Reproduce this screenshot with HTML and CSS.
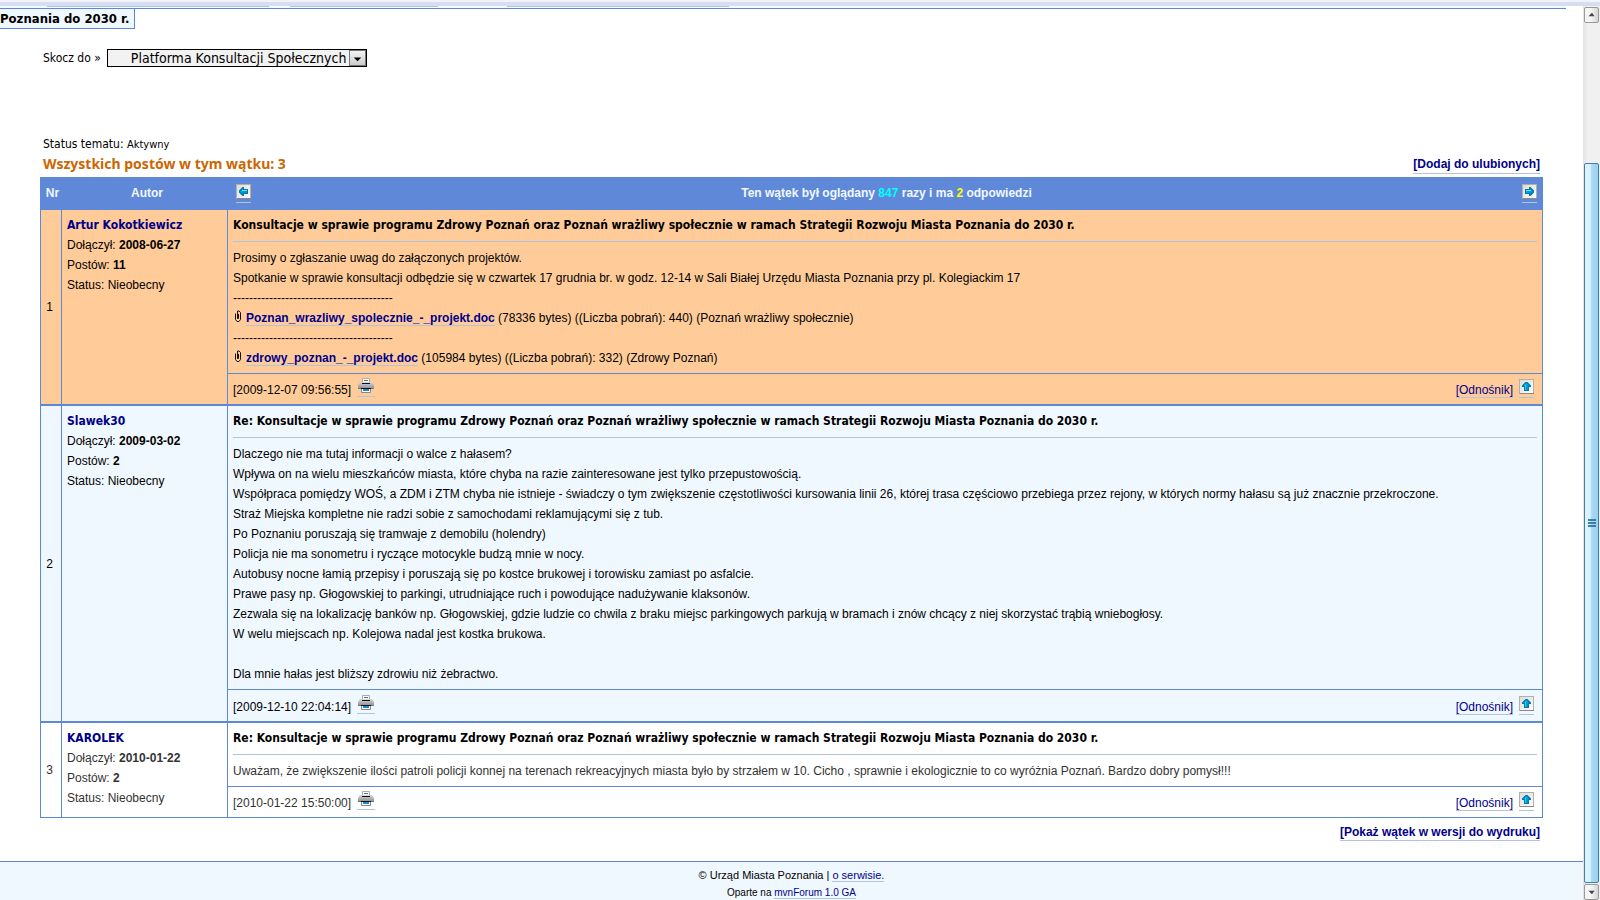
FILE: index.html
```html
<!DOCTYPE html>
<html lang="pl">
<head>
<meta charset="utf-8">
<title>Platforma Konsultacji Społecznych</title>
<link rel="stylesheet" href="styles.css">
</head>
<body>
<svg class="defs" aria-hidden="true">
  <defs>
    <linearGradient id="key" x1="0" y1="0" x2="1" y2="1"><stop offset="0" stop-color="#dcdcd8"/><stop offset="1" stop-color="#fcfcfa"/></linearGradient>
    <linearGradient id="arrow" x1="0" y1="0" x2="1" y2="1"><stop offset="0" stop-color="#00c0ee"/><stop offset="1" stop-color="#0080c4"/></linearGradient>
    <linearGradient id="metal" x1="0" y1="0" x2="0" y2="1"><stop offset="0" stop-color="#d8d8dc"/><stop offset="1" stop-color="#88888e"/></linearGradient>
    <symbol id="frame" viewBox="0 0 15 15">
      <rect width="15" height="15" fill="#b4b0a8"/><rect x="1" y="1" width="13" height="13" fill="url(#key)"/><path d="M1 14.5h14" stroke="#8c8982"/>
    </symbol>
    <symbol id="right" viewBox="0 0 15 15">
      <use href="#frame"/><path d="M3 5h4V3h1.500L12 6.500v2L8.500 12H7v-2H3z" fill="#0078ac"/><path d="M4 6h4V4.500l3 3-3 3V9H4z" fill="url(#arrow)"/><path d="M4 6.500h5" stroke="#6cdcf8"/>
    </symbol>
    <symbol id="left" viewBox="0 0 15 15">
      <use href="#frame"/><path d="M12 5H8V3H6.500L3 6.500v2L6.500 12H8v-2h4z" fill="#0078ac"/><path d="M11 6H7V4.500l-3 3 3 3V9h4z" fill="url(#arrow)"/><path d="M6 6.500h5" stroke="#6cdcf8"/>
    </symbol>
    <symbol id="up" viewBox="0 0 15 15">
      <use href="#frame"/><path d="M5 12V8H3V6.500L6.500 3h2L12 6.500V8h-2v4z" fill="#0078ac"/><path d="M6 11V7H4.500l3-3 3 3H9v4z" fill="url(#arrow)"/><path d="M6.500 5.500V11" stroke="#30c8f0"/>
    </symbol>
    <symbol id="printer" viewBox="0 0 18 16">
      <path d="M5.500 5V.5h7V5" fill="#fff" stroke="#aaa"/><path d="M7 2.500h4" stroke="#666"/>
      <path d="M3 4h12l2 3v4H1V7z" fill="url(#metal)"/><path d="M5 5.500h8" stroke="#111"/><path d="M1 10.500h16" stroke="#777"/>
      <path d="M4.500 10.500h9v4h-9z" fill="#fff" stroke="#888"/><path d="M4 10.500h10" stroke="#111"/><path d="M6 11h6v2H6z" fill="#1688dc"/>
    </symbol>
    <symbol id="clip" viewBox="0 0 8 13">
      <path d="M1.500 3.500v6l1.500 2h2l1.500-2v-7L5 1H3.500v7.500h1V4" fill="none" stroke="#111"/>
    </symbol>
  </defs>
</svg>
<div class="toolbar"></div>
<div class="window">
  <main class="page">
    <div class="crumbs"><i></i><i></i><i></i></div>
    <h1 class="topic">Poznania do 2030 r.</h1>
    <form class="jump">
      <label for="forum">Skocz do »</label>
      <span class="picker">
        <select id="forum"><option>Platforma Konsultacji Społecznych</option></select>
        <svg class="drop" viewBox="0 0 16 15"><path d="M4 7h8l-4 4z"/></svg>
      </span>
    </form>
    <div class="status">Status tematu: <small>Aktywny</small></div>
    <div class="count">
      <h2>Wszystkich postów w tym wątku: 3</h2>
      <a class="strong" href="#ulubione">[Dodaj do ulubionych]</a>
    </div>
    <table class="thread">
      <colgroup><col class="col-nr"><col class="col-author"><col></colgroup>
      <thead>
        <tr>
          <th scope="col">Nr</th>
          <th scope="col">Autor</th>
          <th scope="col">
            <div class="views">
              <a class="key" href="#prev" aria-label="Poprzedni wątek"><svg><use href="#left"/></svg></a>
              <span>Ten wątek był oglądany <b class="cyan">847</b> razy i ma <b class="yellow">2</b> odpowiedzi</span>
              <a class="key" href="#next" aria-label="Następny wątek"><svg><use href="#right"/></svg></a>
            </div>
          </th>
        </tr>
      </thead>
      <tbody class="first">
        <tr>
          <td class="nr" rowspan="2">1</td>
          <td class="author" rowspan="2"><a href="#artur">Artur Kokotkiewicz</a><br>Dołączył: <b>2008-06-27</b><br>Postów: <b>11</b><br>Status: Nieobecny</td>
          <td class="post">
            <h3>Konsultacje w sprawie programu Zdrowy Poznań oraz Poznań wrażliwy społecznie w ramach Strategii Rozwoju Miasta Poznania do 2030 r.</h3>
            <p>Prosimy o zgłaszanie uwag do załączonych projektów.<br>
            Spotkanie w sprawie konsultacji odbędzie się w czwartek 17 grudnia br. w godz. 12-14 w Sali Białej Urzędu Miasta Poznania przy pl. Kolegiackim 17<br>
            ----------------------------------------<br>
            <svg class="clip"><use href="#clip"/></svg><a class="strong" href="#plik1">Poznan_wrazliwy_spolecznie_-_projekt.doc</a> (78336 bytes) ((Liczba pobrań): 440) (Poznań wrażliwy społecznie)<br>
            ----------------------------------------<br>
            <svg class="clip"><use href="#clip"/></svg><a class="strong" href="#plik2">zdrowy_poznan_-_projekt.doc</a> (105984 bytes) ((Liczba pobrań): 332) (Zdrowy Poznań)</p>
          </td>
        </tr>
        <tr>
          <td class="meta"><div>
            <span>[2009-12-07 09:56:55]</span>
            <a class="print" href="#druk1" aria-label="Drukuj"><svg><use href="#printer"/></svg></a>
            <a class="ref" href="#post1">[Odnośnik]</a>
            <a class="key" href="#top" aria-label="Do góry"><svg><use href="#up"/></svg></a>
          </div></td>
        </tr>
      </tbody>
      <tbody class="even">
        <tr>
          <td class="nr" rowspan="2">2</td>
          <td class="author" rowspan="2"><a href="#slawek">Slawek30</a><br>Dołączył: <b>2009-03-02</b><br>Postów: <b>2</b><br>Status: Nieobecny</td>
          <td class="post">
            <h3>Re: Konsultacje w sprawie programu Zdrowy Poznań oraz Poznań wrażliwy społecznie w ramach Strategii Rozwoju Miasta Poznania do 2030 r.</h3>
            <p>Dlaczego nie ma tutaj informacji o walce z hałasem?<br>
            Wpływa on na wielu mieszkańców miasta, które chyba na razie zainteresowane jest tylko przepustowością.<br>
            Współpraca pomiędzy WOŚ, a ZDM i ZTM chyba nie istnieje - świadczy o tym zwiększenie częstotliwości kursowania linii 26, której trasa częściowo przebiega przez rejony, w których normy hałasu są już znacznie przekroczone.<br>
            Straż Miejska kompletne nie radzi sobie z samochodami reklamującymi się z tub.<br>
            Po Poznaniu poruszają się tramwaje z demobilu (holendry)<br>
            Policja nie ma sonometru i ryczące motocykle budzą mnie w nocy.<br>
            Autobusy nocne łamią przepisy i poruszają się po kostce brukowej i torowisku zamiast po asfalcie.<br>
            Prawe pasy np. Głogowskiej to parkingi, utrudniające ruch i powodujące nadużywanie klaksonów.<br>
            Zezwala się na lokalizację banków np. Głogowskiej, gdzie ludzie co chwila z braku miejsc parkingowych parkują w bramach i znów chcący z niej skorzystać trąbią wniebogłosy.<br>
            W welu miejscach np. Kolejowa nadal jest kostka brukowa.<br>
            <br>
            Dla mnie hałas jest bliższy zdrowiu niż żebractwo.</p>
          </td>
        </tr>
        <tr>
          <td class="meta"><div>
            <span>[2009-12-10 22:04:14]</span>
            <a class="print" href="#druk2" aria-label="Drukuj"><svg><use href="#printer"/></svg></a>
            <a class="ref" href="#post2">[Odnośnik]</a>
            <a class="key" href="#top" aria-label="Do góry"><svg><use href="#up"/></svg></a>
          </div></td>
        </tr>
      </tbody>
      <tbody class="last">
        <tr>
          <td class="nr" rowspan="2">3</td>
          <td class="author" rowspan="2"><a href="#karolek">KAROLEK</a><br>Dołączył: <b>2010-01-22</b><br>Postów: <b>2</b><br>Status: Nieobecny</td>
          <td class="post">
            <h3>Re: Konsultacje w sprawie programu Zdrowy Poznań oraz Poznań wrażliwy społecznie w ramach Strategii Rozwoju Miasta Poznania do 2030 r.</h3>
            <p>Uważam, że zwiększenie ilości patroli policji konnej na terenach rekreacyjnych miasta było by strzałem w 10. Cicho , sprawnie i ekologicznie to co wyróżnia Poznań. Bardzo dobry pomysł!!!</p>
          </td>
        </tr>
        <tr>
          <td class="meta"><div>
            <span>[2010-01-22 15:50:00]</span>
            <a class="print" href="#druk3" aria-label="Drukuj"><svg><use href="#printer"/></svg></a>
            <a class="ref" href="#post3">[Odnośnik]</a>
            <a class="key" href="#top" aria-label="Do góry"><svg><use href="#up"/></svg></a>
          </div></td>
        </tr>
      </tbody>
    </table>
    <div class="printall"><a class="strong" href="#wydruk">[Pokaż wątek w wersji do wydruku]</a></div>
    <footer class="footer">
      <div>© Urząd Miasta Poznania | <a href="#serwis">o serwisie.</a></div>
      <div class="engine">Oparte na <a href="#mvnforum">mvnForum 1.0 GA</a></div>
    </footer>
  </main>
  <div class="scroll">
    <button type="button" aria-label="Przewiń w górę"><svg viewBox="0 0 15 15"><path d="M4 9h7L8 5z"/></svg></button>
    <div class="track"><div class="thumb"><i></i><i></i><i></i></div></div>
    <button type="button" aria-label="Przewiń w dół"><svg viewBox="0 0 15 15"><path d="M4 6h7L8 10z"/></svg></button>
  </div>
</div>
</body>
</html>
```
FILE: styles.css
```css
* { box-sizing: border-box; }
body {
  margin: 0;
  height: 100vh;
  overflow: hidden;
  display: flex;
  flex-direction: column;
  background: #fff;
  color: #000;
  font: 12px/20px "Liberation Sans", Arial, sans-serif;
}
h1, h2, h3, p { margin: 0; }
a { color: #00008b; text-decoration: none; }
svg { display: block; }
.defs { position: absolute; width: 0; height: 0; }

.toolbar {
  flex: none;
  height: 6px;
  border-top: 2px solid #f2f3fa;
  background: #d7def0;
}
.window { flex: 1; min-height: 0; display: flex; }
.page { flex: 1; min-width: 0; overflow: hidden; }

.crumbs {
  height: 3px;
  margin-right: 17px;
  padding-left: 47px;
  display: flex;
  gap: 21px;
  background: #f4f9ff;
  border-bottom: 1px solid #5c88d8;
}
.crumbs i { width: 222px; height: 1px; background: #b0c4de; }
.crumbs i:nth-child(2) { width: 148px; margin-right: 48px; }
.topic {
  width: fit-content;
  height: 20px;
  padding-right: 5px;
  background: #f0f8ff;
  border: solid #5c88d8;
  border-width: 0 1px 1px 0;
  font: bold 13px/19px "DejaVu Sans Condensed", Tahoma, sans-serif;
}

.jump {
  display: flex;
  align-items: center;
  gap: 6px;
  margin: 20px 40px 0 43px;
  font: 12px/18px "DejaVu Sans Condensed", Tahoma, sans-serif;
}
.picker { position: relative; }
.picker select {
  display: block;
  appearance: none;
  width: 260px;
  height: 18px;
  padding: 0 0 0 23px;
  border: 1px solid #000;
  border-radius: 0;
  background: #f2f2f2;
  color: #000;
  font: 14px/16px "DejaVu Sans Condensed", Verdana, sans-serif;
}
.drop {
  position: absolute;
  top: 1px;
  right: 1px;
  width: 17px;
  height: 16px;
  border: 1px solid #777;
  background: linear-gradient(#f4f4f4, #ccc);
  pointer-events: none;
}
.status {
  margin: 67px 0 0 43px;
  font: 12px/20px "DejaVu Sans Condensed", Tahoma, sans-serif;
}
.status small { font-size: 11px; }
.count {
  display: flex;
  justify-content: space-between;
  margin: 0 43px 3px;
}
.count h2 {
  color: #cc6600;
  font: bold 14px/18px "Noto Sans", Tahoma, sans-serif;
}
.strong { font-weight: bold; border-bottom: 1px solid #b0c4de; }
.count .strong { height: 19px; line-height: 19px; }

.thread {
  width: calc(100% - 80px);
  margin: 0 40px;
  table-layout: fixed;
  border-collapse: separate;
  border-spacing: 0;
  border: solid #5c88d8;
  border-width: 0 1px 0 0;
}
.col-nr { width: 21px; }
.col-author { width: 166px; }
th {
  height: 33px;
  padding: 0 0 2px;
  background: #5f89d8;
  color: #f0f8ff;
}
th:first-child { padding-left: 4px; }
th:nth-child(2) { padding-left: 6px; }
.views {
  display: flex;
  justify-content: space-between;
  align-items: center;
  padding: 0 5px 0 9px;
}
.cyan { color: #00ffff; }
.yellow { color: #ffff00; }
.key, .print {
  display: block;
  height: 19px;
  border-bottom: 1px solid #b0c4de;
}
.key svg { width: 15px; height: 15px; }
.views .key { margin-top: 2px; }
.print svg { width: 18px; height: 16px; }

td { padding: 0; border-left: 1px solid #5c88d8; }
.nr, .author, .meta { border-bottom: 2px solid #5c88d8; }
.last .nr, .last .author, .last .meta { border-bottom-width: 1px; }
.nr { padding-right: 3px; text-align: center; }
.author { padding: 5px; vertical-align: top; }
.author a, .post h3 { font: bold 12px/20px "DejaVu Sans Condensed", Tahoma, sans-serif; }
.post { padding: 5px; vertical-align: top; border-bottom: 1px solid #5c88d8; }
.post h3 {
  padding-bottom: 6px;
  margin-bottom: 6px;
  border-bottom: 1px solid #b0c4de;
  color: #000;
}
.meta { height: 32px; }
.even .meta { height: 33px; }
.last .meta { height: 31px; }
.meta div { display: flex; padding: 1px 8px 0 5px; height: 24px; }
.meta span, .ref { line-height: 20px; margin-top: 2px; }
.print { margin-left: 6px; }
.ref { margin-left: auto; height: 18px; border-bottom: 1px solid #b0c4de; }
.meta .key { margin: 1px 0 0 6px; }
.first { background: #ffcc99; }
.even { background: #f0f8ff; }
.last { color: #333; }
.clip { display: inline-block; width: 8px; height: 13px; margin: 0 4px 0 1px; vertical-align: -1px; }

.printall {
  display: flex;
  justify-content: flex-end;
  margin: 5px 43px 20px;
}
.printall a { height: 18px; line-height: 19px; }

.footer {
  height: 60px;
  padding-top: 4px;
  border-top: 1px solid #5c88d8;
  background: #f0f8ff;
  text-align: center;
  font-size: 11px;
  line-height: 18px;
}
.footer a { border-bottom: 1px solid #b0c4de; }
.engine { font-size: 10px; }

.scroll {
  flex: none;
  width: 17px;
  padding: 1px 1px 0;
  display: flex;
  flex-direction: column;
  background: linear-gradient(90deg, #e3e3e3, #f0f0f0 30%);
}
.scroll button {
  height: 16px;
  padding: 0;
  border: 1px solid #999;
  border-radius: 2px;
  background: linear-gradient(90deg, #f5f5f5 45%, #d5d5d5);
}
.scroll button svg { width: 13px; height: 14px; fill: #444; }
.track { flex: 1; display: flex; flex-direction: column; padding-top: 140px; }
.thumb {
  flex: 1;
  display: flex;
  flex-direction: column;
  align-items: center;
  justify-content: center;
  gap: 1px;
  margin-bottom: 1px;
  border: 1px solid #3c7fb1;
  border-radius: 2px;
  background: linear-gradient(90deg, #e3f4fc, #d6eefb 45%, #a9dbf5 46%, #9cd0ec);
}
.thumb i { width: 8px; height: 2px; background: #3c7fa8; }
```
